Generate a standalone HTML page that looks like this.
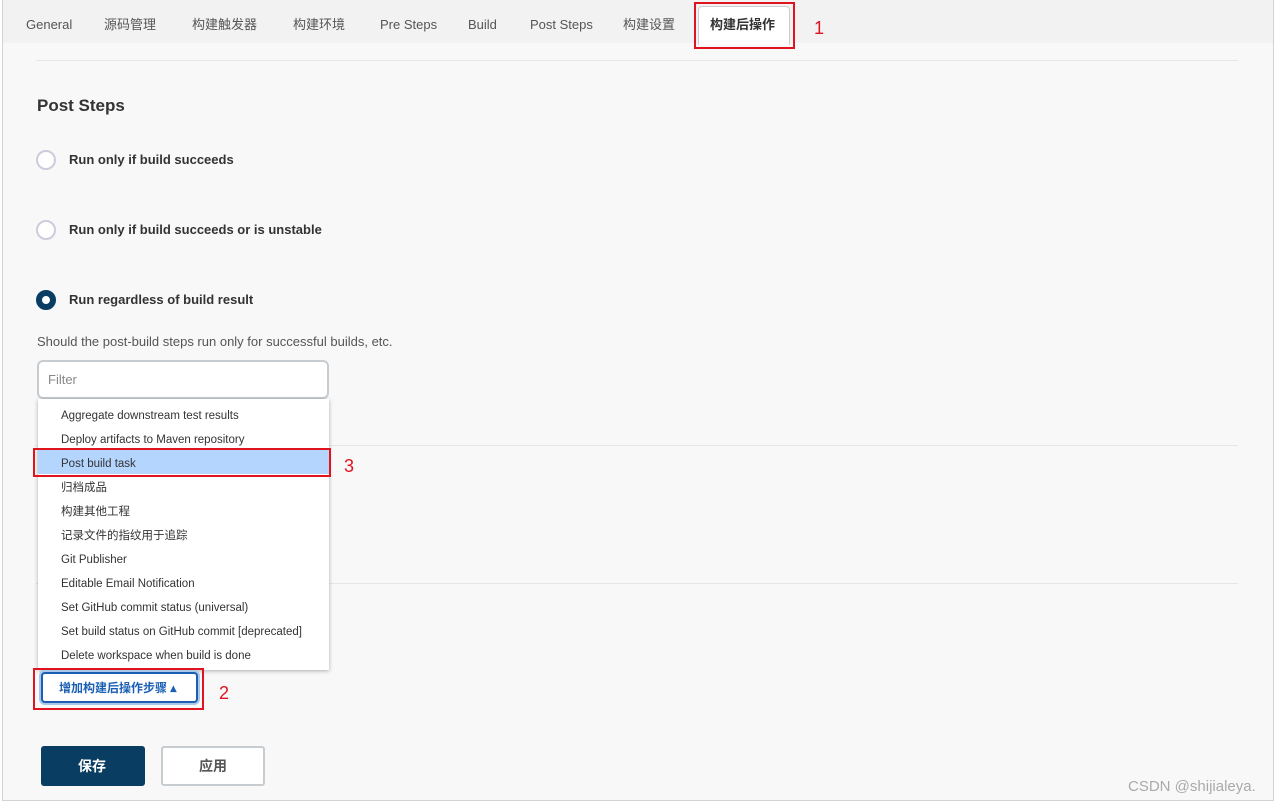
<!DOCTYPE html>
<html><head><meta charset="utf-8"><style>
body{margin:0;width:1278px;height:807px;background:#fff;font-family:"Liberation Sans","Noto Sans CJK SC",sans-serif;position:relative;overflow:hidden;color:#333}
span,div{line-height:16px}
.frame{position:absolute;left:2px;top:0;width:1270px;height:800px;background:#f8f8f9;border-left:1px solid #cfd3d6;border-right:1px solid #cfd3d6;border-bottom:1px solid #cfd3d6}
.tabs{position:absolute;left:0;top:0;width:1270px;height:43px;background:#f2f2f2}
.tab{position:absolute;top:17px;font-size:13px;color:#555}
.abs{position:absolute}
.hr{position:absolute;left:36px;width:1202px;height:1px;background:#e6e6e6}
.radio{position:absolute;left:36px;width:20px;height:20px;border:2px solid #ccd;border-radius:50%;box-sizing:border-box;background:#fff}
.rl{position:absolute;left:69px;font-size:13px;font-weight:bold;color:#333}
.red{position:absolute;border:2px solid #e0141e}
.num{position:absolute;color:#e0141e;font-size:18px;line-height:20px}
.menu{position:absolute;left:38px;top:399px;width:291px;height:271px;background:#fff;box-shadow:0 1px 4px rgba(0,0,0,.3)}
.mi{position:absolute;left:23px;font-size:11.5px;color:#333}
</style></head><body>
<div class="frame">
<div class="tabs">
<span class="tab" style="left:23px">General</span>
<span class="tab" style="left:101px">源码管理</span>
<span class="tab" style="left:189px">构建触发器</span>
<span class="tab" style="left:290px">构建环境</span>
<span class="tab" style="left:377px">Pre Steps</span>
<span class="tab" style="left:465px">Build</span>
<span class="tab" style="left:527px">Post Steps</span>
<span class="tab" style="left:620px">构建设置</span>
</div>
</div>
<div class="abs" style="left:698px;top:6px;width:90px;height:38px;background:#fff;border:1px solid #ccc;border-bottom:none;border-radius:4px 4px 0 0"></div>
<span class="abs" style="left:710px;top:17px;font-size:13px;font-weight:bold;color:#333">构建后操作</span>
<div class="red" style="left:694px;top:2px;width:97px;height:43px"></div>
<span class="num" style="left:814px;top:18px">1</span>
<div class="hr" style="top:60px"></div>
<div class="abs" style="left:37px;top:97px;font-size:17px;line-height:18px;font-weight:bold;color:#333">Post Steps</div>
<div class="radio" style="top:150px"></div><span class="rl" style="top:152px">Run only if build succeeds</span>
<div class="radio" style="top:220px"></div><span class="rl" style="top:222px">Run only if build succeeds or is unstable</span>
<div class="radio" style="top:290px;border:6px solid #0a3d62"></div><span class="rl" style="top:292px">Run regardless of build result</span>
<div class="abs" style="left:37px;top:334px;font-size:13px;color:#555">Should the post-build steps run only for successful builds, etc.</div>
<div class="abs" style="left:37px;top:360px;width:292px;height:39px;box-sizing:border-box;border:2px solid #c6ccd0;border-radius:6px;background:#fff"></div>
<span class="abs" style="left:48px;top:372px;font-size:13px;color:#888">Filter</span>
<div class="hr" style="top:445px"></div>
<div class="hr" style="top:583px"></div>
<div class="menu">
<div class="abs" style="left:0;top:51px;width:291px;height:24px;background:#b4d5fe"></div>
<span class="mi" style="top:9px">Aggregate downstream test results</span>
<span class="mi" style="top:33px">Deploy artifacts to Maven repository</span>
<span class="mi" style="top:57px">Post build task</span>
<span class="mi" style="top:81px">归档成品</span>
<span class="mi" style="top:105px">构建其他工程</span>
<span class="mi" style="top:129px">记录文件的指纹用于追踪</span>
<span class="mi" style="top:153px">Git Publisher</span>
<span class="mi" style="top:177px">Editable Email Notification</span>
<span class="mi" style="top:201px">Set GitHub commit status (universal)</span>
<span class="mi" style="top:225px">Set build status on GitHub commit [deprecated]</span>
<span class="mi" style="top:249px">Delete workspace when build is done</span>
</div>
<div class="red" style="left:33px;top:448px;width:294px;height:25px"></div>
<span class="num" style="left:344px;top:456px">3</span>
<div class="abs" style="left:41px;top:672px;width:157px;height:31px;box-sizing:border-box;border:2px solid #1a5fb4;border-radius:4px;background:#fff;box-shadow:0 0 0 2px #a9c7e8"></div>
<span class="abs" style="left:59px;top:680px;font-size:12px;font-weight:bold;color:#1a5fb4">增加构建后操作步骤 ▴</span>
<div class="red" style="left:33px;top:668px;width:167px;height:38px"></div>
<span class="num" style="left:219px;top:683px">2</span>
<div class="abs" style="left:41px;top:746px;width:104px;height:40px;background:#0a3d62;border-radius:3px"></div>
<span class="abs" style="left:78px;top:758px;font-size:14px;font-weight:bold;color:#fff">保存</span>
<div class="abs" style="left:161px;top:746px;width:104px;height:40px;box-sizing:border-box;border:2px solid #c6ccd0;border-radius:3px;background:#fff"></div>
<span class="abs" style="left:199px;top:758px;font-size:14px;font-weight:bold;color:#555">应用</span>
<span class="abs" style="left:1128px;top:779px;font-size:15px;color:#aaa">CSDN @shijialeya.</span>
</body></html>
